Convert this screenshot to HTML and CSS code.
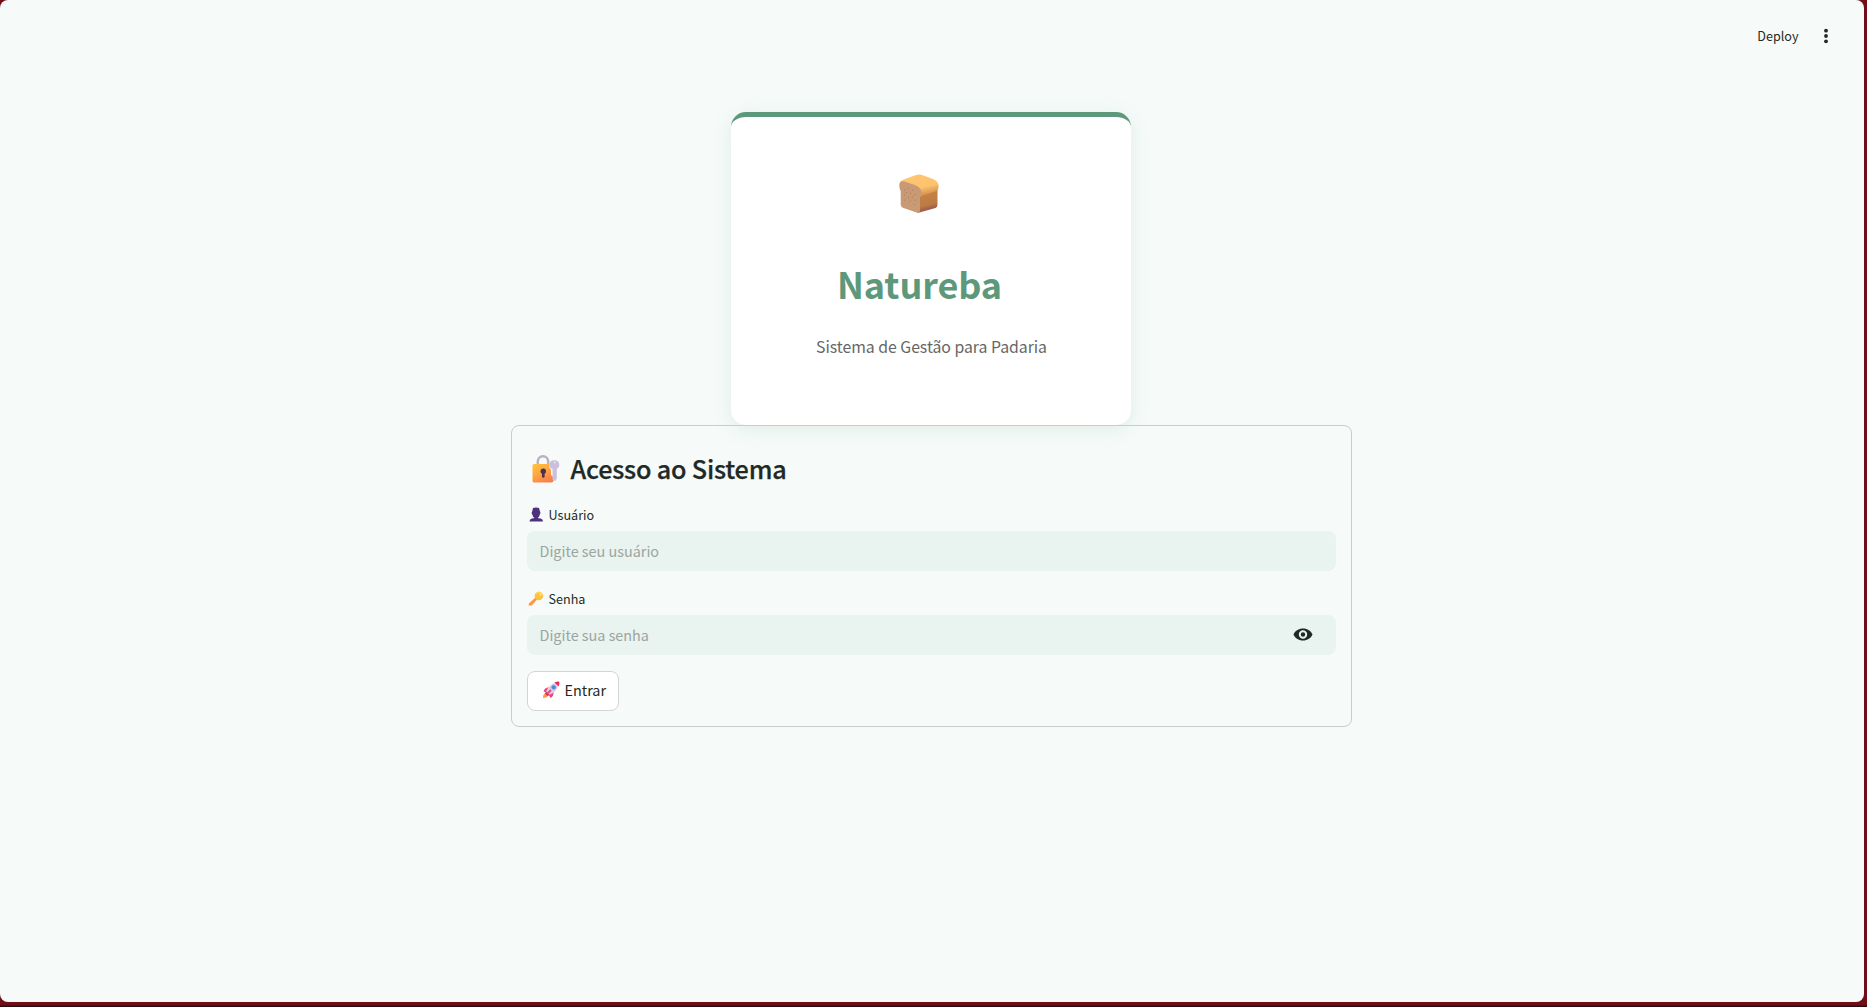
FILE: index.html
```html
<!DOCTYPE html>
<html lang="pt-BR">
<head>
<meta charset="utf-8">
<title>Natureba</title>
<link rel="stylesheet" href="styles.css">
</head>
<body>
<div class="app">
  <header class="toolbar">
    <span class="deploy">Deploy</span>
    <svg class="menu" viewBox="0 0 20 20"><circle cx="10" cy="4.700" r="1.900"/><circle cx="10" cy="10" r="1.900"/><circle cx="10" cy="15.300" r="1.900"/></svg>
  </header>
  <main class="main">
    <section class="card">
      <svg class="bread" viewBox="0 0 40 40">
        <defs>
          <linearGradient id="crust" x1="0" y1="0" x2=".4" y2="1"><stop offset="0" stop-color="#ffc670"/><stop offset=".7" stop-color="#fdc26d"/><stop offset="1" stop-color="#d9944d"/></linearGradient>
          <linearGradient id="side" x1="0" y1="0" x2=".2" y2="1"><stop offset="0" stop-color="#c7864a"/><stop offset=".75" stop-color="#bd7a43"/><stop offset="1" stop-color="#8f5050"/></linearGradient>
          <linearGradient id="slice" x1="0" y1="0" x2="0" y2="1"><stop offset="0" stop-color="#c79a76"/><stop offset="1" stop-color="#c89b73"/></linearGradient>
        </defs>
        <path d="M20 17 38.500 14V31Q38.500 33 36.500 34L18.500 39Z" fill="url(#side)"/>
        <path d="M1 8Q3 6 6 5L17 1Q20 0 23 1L34 5Q40 7.500 39.700 12.500 39.500 16.500 35 18L21 22.500Z" fill="url(#crust)"/>
        <path d="M.3 11Q.3 6.500 5.500 7.500L16 11Q22.500 13.500 22.500 19 22.500 22 21 23V36Q21 39.500 17.500 38.600L4.500 34Q1.700 33 1.700 30.500V17Q.3 15 .3 11Z" fill="url(#slice)"/>
        <g fill="#a3785a"><circle cx="5.500" cy="16" r=".6"/><circle cx="9" cy="14.500" r=".6"/><circle cx="13.500" cy="16" r=".6"/><circle cx="7.500" cy="18.500" r=".6"/><circle cx="11.500" cy="19" r=".6"/><circle cx="5.500" cy="21" r=".6"/><circle cx="16" cy="20.500" r=".6"/><circle cx="9.500" cy="23.500" r=".6"/><circle cx="13.500" cy="23" r=".6"/><circle cx="5.500" cy="26" r=".6"/><circle cx="11.500" cy="27" r=".6"/><circle cx="16" cy="26" r=".6"/><circle cx="15.500" cy="30.500" r=".6"/></g>
      </svg>
      <h1 class="brand">Natureba</h1>
      <p class="tagline">Sistema de Gestão para Padaria</p>
    </section>
    <form class="login">
      <h2 class="title">
        <svg class="lock" viewBox="0 0 28 28">
          <defs>
            <linearGradient id="gold" x1="0" y1="0" x2=".6" y2="1"><stop offset="0" stop-color="#ffc43f"/><stop offset=".5" stop-color="#ffa83f"/><stop offset="1" stop-color="#fa7f4c"/></linearGradient>
          </defs>
          <path d="M5.800 11V6.500a5 5 0 0 1 10.400 0V11" fill="none" stroke="#b9b0c0" stroke-width="2.500"/>
          <path d="M2 9H17V10.500Q17 13 19 14.500V20L21.500 22V25.500Q21.500 27.500 19.500 27.500H2Q.5 27.500.5 26V10.500Q.5 9 2 9Z" fill="url(#gold)"/>
          <circle cx="11.300" cy="16.300" r="2.700" fill="#4a3156"/><rect x="10" y="17" width="2.600" height="5.800" rx="1.300" fill="#4a3156"/>
          <path d="M22.700 5.300a4.500 4.500 0 0 1 2.100 8.500V23.500Q24 26 22 26 20.500 25.700 20.500 24V14A4.500 4.500 0 0 1 22.700 5.300Z" fill="#ccbfdc"/>
          <circle cx="22.700" cy="7.500" r=".8" fill="#f6fbf9"/>
        </svg>
        <span>Acesso ao Sistema</span>
      </h2>
      <div class="label">
        <svg class="mini" viewBox="0 0 16 16"><path d="M5 1Q8 0 11 1L12 4.500Q13 6 11.800 7.500 11.500 10 9.800 10.500 10 11.500 12.500 11.600 15 12 15 14.500H1.500Q1.500 12 4 11.600 6.200 11.500 6.400 10.500 4.700 10 4.300 7.500 3 6 4.200 4.500Z" fill="#4f307c"/></svg>
        <span>Usuário</span>
      </div>
      <div class="field"><span>Digite seu usuário</span></div>
      <div class="label second">
        <svg class="mini" viewBox="0 0 16 16"><path d="M2 13.200 9 7" stroke="#f69a49" stroke-width="2.800" stroke-linecap="round"/><path d="m3 13 1.300 1.200M5 11l1.200 1.200" stroke="#f69a49" stroke-width="1.800"/><circle cx="10.900" cy="5" r="4.300" fill="#ffc13e"/><path d="M8 2.500Q11 .3 13.500 3" stroke="#ffd85a" stroke-width="1.500" fill="none"/><circle cx="12.500" cy="3.600" r=".9" fill="#fbf2c9"/></svg>
        <span>Senha</span>
      </div>
      <div class="field">
        <span>Digite sua senha</span>
        <svg class="eye" viewBox="0 0 20 13"><path fill-rule="evenodd" d="M10 .5C5.500.5 2 3 .5 6.500 2 10 5.500 12.500 10 12.500S18 10 19.500 6.500C18 3 14.500.5 10 .5ZM10 2.300a4.200 4.200 0 1 1 0 8.400 4.200 4.200 0 0 1 0-8.400Z"/><circle cx="10" cy="6.500" r="2.200"/></svg>
      </div>
      <button class="submit" type="button">
        <svg class="rocket" viewBox="0 0 18 18"><path d="M1 17Q1 12 4.500 12L6.500 14Q5 17 1 17Z" fill="#ff9b3d"/><path d="M7 6.500Q3 6 1.500 10.500L5 11.500Z" fill="#f0437d"/><path d="M11.500 11Q12 15 8.500 17L6.500 13.500Z" fill="#f0437d"/><path d="M4 11Q6.500 3.500 14 1.500L16.500 4Q14.500 11.500 7 14Z" fill="#dccfe3"/><path d="M12.500 1.500Q15.500.3 17.300.7 17.700 2.500 16.700 5.500Z" fill="#ed2858"/><path d="M4 10.500 7.500 14 5.500 15 3 12.500Z" fill="#c92e68"/><path d="M5.500 12.500 9 9" stroke="#ef467e" stroke-width="2"/><circle cx="11.700" cy="6.300" r="2" fill="#358fe7" stroke="#8c8bc0" stroke-width=".7"/></svg>
        <span>Entrar</span>
      </button>
    </form>
  </main>
</div>
</body>
</html>
```
FILE: styles.css
```css
* { box-sizing: border-box; }
body {
  margin: 0;
  height: 1007px;
  overflow: hidden;
  background: linear-gradient(#700e17 1005px, #2b0c10 1006px);
  font-family: "Noto Sans CJK SC", "Noto Sans", sans-serif;
  color: #1f2a26;
}
h1, h2, p { margin: 0; }
svg { display: block; flex: none; }
.app {
  width: 1864px;
  height: 1002px;
  border-radius: 8px;
  background: #f6fbf9;
}
.toolbar {
  height: 112px;
  padding: 26px 28px 0 0;
  display: flex;
  justify-content: flex-end;
  align-items: flex-start;
  gap: 17.5px;
  font-size: 12.6px;
  line-height: 20px;
}
.menu { width: 20px; height: 20px; fill: #1f2a26; }
.main { width: 841px; margin-left: 511px; }
.card {
  width: 400px;
  height: 313px;
  margin: 0 0 0 220px;
  padding-top: 57px;
  border-top: 5px solid #5d987b;
  border-radius: 15px;
  background: #fff;
  box-shadow: 0 4px 20px rgba(93, 152, 123, .15);
  display: flex;
  flex-direction: column;
  align-items: center;
}
.bread { width: 40px; height: 40px; margin-right: 24px; }
.brand {
  margin: 45px 23px 0 0;
  font-size: 36px;
  line-height: 48px;
  font-weight: 700;
  letter-spacing: -.1px;
  color: #5d987b;
}
.tagline {
  margin: 26px 0 0 1px;
  font-size: 15.84px;
  line-height: 28px;
  letter-spacing: -.03px;
  color: #666;
}
.login {
  height: 302px;
  padding: 25px 15px 0;
  border: 1px solid #c8cecb;
  border-radius: 8px;
}
.title {
  height: 34px;
  display: flex;
  align-items: center;
  gap: 10.5px;
  padding-left: 5px;
  font-size: 25.2px;
  line-height: 34px;
  font-weight: 500;
  letter-spacing: -.2px;
  -webkit-text-stroke: .25px #1f2a26;
}
.lock { width: 28px; height: 28px; margin-top: 1px; }
.label {
  height: 20px;
  margin: 20px 0 6px;
  padding-left: 1px;
  display: flex;
  gap: 4.5px;
  font-size: 12.6px;
  line-height: 20px;
}
.label.second { margin-top: 18px; }
.mini { width: 16px; height: 16px; margin-top: 2px; }
.field {
  height: 40px;
  padding: 0 23px 0 12.5px;
  border-radius: 8px;
  background: #e9f3ef;
  display: flex;
  align-items: center;
  justify-content: space-between;
  font-size: 14.4px;
  line-height: 24px;
  color: #9ba5a1;
}
.eye { width: 20px; height: 13px; margin-bottom: 1px; fill: #1f2a26; }
.submit {
  width: 92px;
  height: 40px;
  margin-top: 16px;
  padding: 0 0 2px 13.5px;
  display: flex;
  align-items: center;
  gap: 5px;
  border: 1px solid #d2d5d4;
  border-radius: 8px;
  background: #fff;
  font: 14.4px/24px "Noto Sans CJK SC", "Noto Sans", sans-serif;
  color: #1f2a26;
}
.rocket { width: 18px; height: 18px; }
```
